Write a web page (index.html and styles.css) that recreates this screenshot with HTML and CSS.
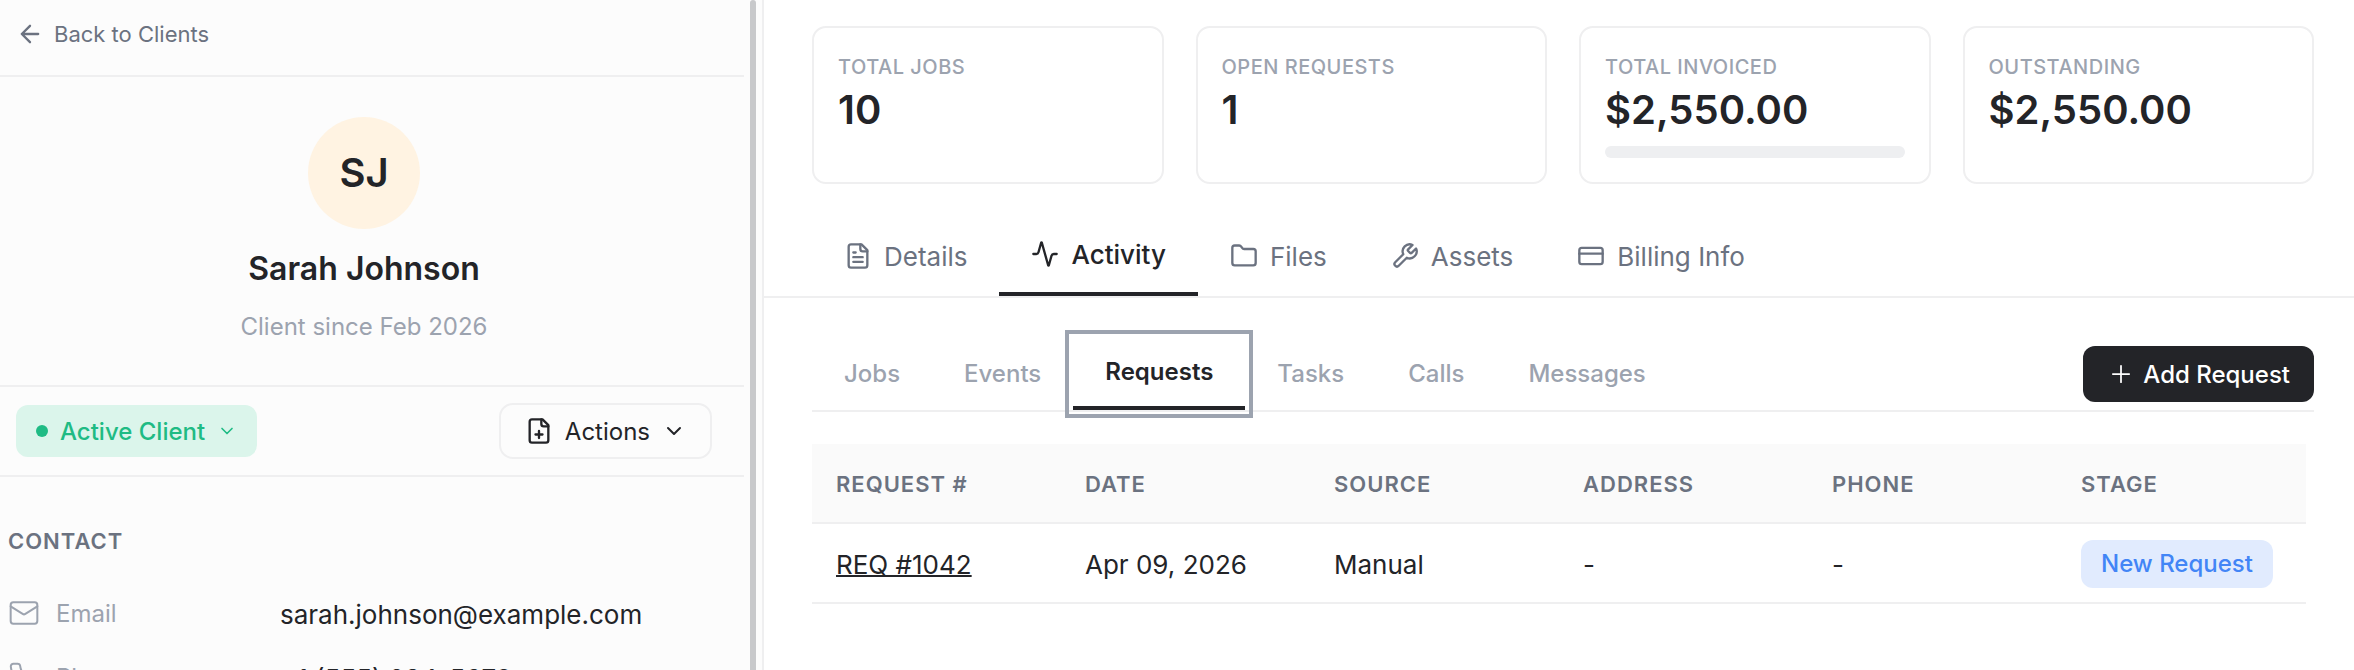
FILE: index.html
```html
<!DOCTYPE html>
<html lang="en">
<head>
<meta charset="utf-8">
<meta name="viewport" content="width=device-width, initial-scale=1">
<title>Sarah Johnson – Client</title>
<link rel="stylesheet" href="styles.css">
</head>
<body>
<div class="app">
  <aside class="sidebar">
    <div class="sidebar-body">
      <nav class="back">
        <a class="back-link" href="#clients">
          <svg class="icon" viewBox="0 0 24 24" aria-hidden="true"><path d="m12 19-7-7 7-7M19 12H5"/></svg>
          Back to Clients
        </a>
      </nav>
      <section class="profile">
        <div class="avatar">SJ</div>
        <h1 class="name">Sarah Johnson</h1>
        <p class="since">Client since Feb 2026</p>
      </section>
      <div class="status-row">
        <button class="status" type="button">
          <span class="dot"></span>
          Active Client
          <svg class="icon icon-xs" viewBox="0 0 24 24" aria-hidden="true"><path d="m6 9 6 6 6-6"/></svg>
        </button>
        <button class="actions" type="button">
          <svg class="icon" viewBox="0 0 24 24" aria-hidden="true"><path d="M15 2H6a2 2 0 0 0-2 2v16a2 2 0 0 0 2 2h12a2 2 0 0 0 2-2V7Z"/><path d="M14 2v4a2 2 0 0 0 2 2h4M9 15h6M12 12v6"/></svg>
          Actions
          <svg class="icon icon-sm" viewBox="0 0 24 24" aria-hidden="true"><path d="m6 9 6 6 6-6"/></svg>
        </button>
      </div>
      <section class="contact">
        <h2 class="contact-title">Contact</h2>
        <dl class="fields">
          <div class="field">
            <dt class="field-label">
              <svg class="icon icon-lg" viewBox="0 0 24 24" aria-hidden="true"><rect x="2" y="4" width="20" height="16" rx="2"/><path d="m22 7-8.97 5.7a1.94 1.94 0 0 1-2.06 0L2 7"/></svg>
              Email
            </dt>
            <dd class="field-value">sarah.johnson@example.com</dd>
          </div>
          <div class="field">
            <dt class="field-label">
              <svg class="icon icon-lg" viewBox="0 0 24 24" aria-hidden="true"><path d="M22 16.92v3a2 2 0 0 1-2.18 2 19.79 19.79 0 0 1-8.63-3.07 19.5 19.5 0 0 1-6-6 19.79 19.79 0 0 1-3.07-8.67A2 2 0 0 1 4.11 2h3a2 2 0 0 1 2 1.72 12.84 12.84 0 0 0 .7 2.81 2 2 0 0 1-.45 2.11L8.09 9.91a16 16 0 0 0 6 6l1.27-1.27a2 2 0 0 1 2.11-.45 12.84 12.84 0 0 0 2.81.7A2 2 0 0 1 22 16.92z"/></svg>
              Phone
            </dt>
            <dd class="field-value">+1 (555) 234-5678</dd>
          </div>
        </dl>
      </section>
    </div>
    <div class="scrollbar"></div>
  </aside>

  <main class="main">
    <section class="stats">
      <article class="card">
        <h2 class="card-label">Total Jobs</h2>
        <p class="card-value">10</p>
      </article>
      <article class="card">
        <h2 class="card-label">Open Requests</h2>
        <p class="card-value">1</p>
      </article>
      <article class="card">
        <h2 class="card-label">Total Invoiced</h2>
        <p class="card-value">$2,550.00</p>
        <div class="meter"></div>
      </article>
      <article class="card">
        <h2 class="card-label">Outstanding</h2>
        <p class="card-value">$2,550.00</p>
      </article>
    </section>

    <div class="tabs" role="tablist">
      <button class="tab" type="button" role="tab">
        <svg class="icon" viewBox="0 0 24 24" aria-hidden="true"><path d="M15 2H6a2 2 0 0 0-2 2v16a2 2 0 0 0 2 2h12a2 2 0 0 0 2-2V7Z"/><path d="M14 2v4a2 2 0 0 0 2 2h4M10 9H8M16 13H8M16 17H8"/></svg>
        Details
      </button>
      <button class="tab tab-active" type="button" role="tab" aria-selected="true">
        <svg class="icon" viewBox="0 0 24 24" aria-hidden="true"><path d="M22 12h-2.48a2 2 0 0 0-1.93 1.46l-2.35 8.36a.25.25 0 0 1-.48 0L9.24 2.18a.25.25 0 0 0-.48 0l-2.35 8.36A2 2 0 0 1 4.49 12H2"/></svg>
        Activity
      </button>
      <button class="tab" type="button" role="tab">
        <svg class="icon" viewBox="0 0 24 24" aria-hidden="true"><path d="M20 20a2 2 0 0 0 2-2V8a2 2 0 0 0-2-2h-7.900a2 2 0 0 1-1.690-.9L9.600 3.900A2 2 0 0 0 7.930 3H4a2 2 0 0 0-2 2v13a2 2 0 0 0 2 2Z"/></svg>
        Files
      </button>
      <button class="tab" type="button" role="tab">
        <svg class="icon" viewBox="0 0 24 24" aria-hidden="true"><path d="M14.700 6.300a1 1 0 0 0 0 1.400l1.600 1.600a1 1 0 0 0 1.400 0l3.770-3.770a6 6 0 0 1-7.940 7.940l-6.910 6.910a2.120 2.120 0 0 1-3-3l6.910-6.910a6 6 0 0 1 7.940-7.940l-3.760 3.760z"/></svg>
        Assets
      </button>
      <button class="tab" type="button" role="tab">
        <svg class="icon" viewBox="0 0 24 24" aria-hidden="true"><rect x="2" y="5" width="20" height="14" rx="2"/><path d="M2 10h20"/></svg>
        Billing Info
      </button>
    </div>

    <section class="activity">
      <div class="activity-bar">
        <div class="subtabs" role="tablist">
          <button class="subtab" type="button" role="tab">Jobs</button>
          <button class="subtab" type="button" role="tab">Events</button>
          <button class="subtab subtab-active" type="button" role="tab" aria-selected="true">Requests</button>
          <button class="subtab" type="button" role="tab">Tasks</button>
          <button class="subtab" type="button" role="tab">Calls</button>
          <button class="subtab" type="button" role="tab">Messages</button>
        </div>
        <button class="add" type="button">
          <svg class="icon icon-thin" viewBox="0 0 24 24" aria-hidden="true"><path d="M5 12h14M12 5v14"/></svg>
          Add Request
        </button>
      </div>
      <div class="table-wrap">
        <table class="requests">
          <thead>
            <tr><th>Request #</th><th>Date</th><th>Source</th><th>Address</th><th>Phone</th><th>Stage</th></tr>
          </thead>
          <tbody>
            <tr>
              <td><a class="req-link" href="#req-1042">REQ #1042</a></td>
              <td>Apr 09, 2026</td>
              <td>Manual</td>
              <td>-</td>
              <td>-</td>
              <td><span class="chip">New Request</span></td>
            </tr>
          </tbody>
        </table>
      </div>
    </section>
  </main>
</div>
</body>
</html>
```
FILE: styles.css
```css
:root {
  --ink: #232428;
  --slate: #6b7280;
  --muted: #9ca3af;
  --line: #efeff0;
  --panel: #fcfcfc;
}

* {
  box-sizing: border-box;
}

body {
  margin: 0;
  overflow: hidden;
  background: #fff;
  color: var(--ink);
  font-family: Inter, "Liberation Sans", sans-serif;
  font-size: 24px;
}

h1, h2, p, dl, dd {
  margin: 0;
}

button {
  margin: 0;
  padding: 0;
  border: 0;
  background: none;
  color: inherit;
  font: inherit;
  white-space: nowrap;
  cursor: pointer;
}

.icon {
  flex: none;
  width: 28px;
  height: 28px;
  fill: none;
  stroke: currentColor;
  stroke-width: 2;
  stroke-linecap: round;
  stroke-linejoin: round;
}

.icon-xs {
  width: 20px;
  height: 20px;
}

.icon-sm {
  width: 24px;
  height: 24px;
}

.icon-lg {
  width: 32px;
  height: 32px;
  stroke-width: 1.5;
}

.icon-thin {
  stroke-width: 1.5;
}

.app {
  display: flex;
  height: 100vh;
}

/* Sidebar */
.sidebar {
  display: flex;
  flex: none;
  gap: 6px;
  width: 764px;
  padding-right: 6px;
  border-right: 2px solid var(--line);
  background: var(--panel);
  overflow: hidden;
}

.sidebar-body {
  flex: 1;
}

.scrollbar {
  width: 6px;
  border-radius: 3px 3px 0 0;
  background: #c8c9cb;
}

.back {
  padding: 18px 16px 25px;
  border-bottom: 2px solid var(--line);
}

.back-link {
  display: flex;
  align-items: center;
  gap: 10px;
  color: var(--slate);
  font-size: 22px;
  line-height: 32px;
  text-decoration: none;
}

.profile {
  display: flex;
  flex-direction: column;
  align-items: center;
  gap: 21px;
  padding: 40px 16px 40px 0;
  border-bottom: 2px solid var(--line);
}

.avatar {
  width: 112px;
  height: 112px;
  border-radius: 50%;
  background: #fff3e2;
  font-size: 40px;
  font-weight: 600;
  line-height: 112px;
  text-align: center;
}

.name {
  font-size: 32px;
  font-weight: 600;
  line-height: 38px;
}

.since {
  color: var(--muted);
  line-height: 36px;
}

.status-row {
  display: flex;
  align-items: center;
  justify-content: space-between;
  padding: 16px 32px 16px 16px;
  border-bottom: 2px solid var(--line);
}

.status {
  display: flex;
  align-items: center;
  gap: 12px;
  height: 52px;
  padding: 0 20px;
  border-radius: 12px;
  background: #dbf5eb;
  color: #1fbb84;
  font-weight: 500;
}

.dot {
  width: 12px;
  height: 12px;
  border-radius: 50%;
  background: currentColor;
}

.actions {
  display: flex;
  align-items: center;
  gap: 12px;
  height: 56px;
  padding: 0 24px;
  border: 2px solid var(--line);
  border-radius: 14px;
}

.contact {
  padding: 48px 32px 0 8px;
}

.contact-title {
  margin-bottom: 24px;
  color: var(--slate);
  font-size: 22px;
  font-weight: 600;
  letter-spacing: 1px;
  line-height: 32px;
  text-transform: uppercase;
}

.field {
  display: grid;
  grid-template-columns: 272px 1fr;
  height: 64px;
}

.field-label {
  display: flex;
  align-items: center;
  gap: 16px;
  color: var(--muted);
}

.field-value {
  padding-top: 4px;
  font-size: 26px;
  line-height: 60px;
}

/* Main column */
.main {
  flex: 1;
  min-width: 0;
  padding-top: 26px;
}

.stats {
  display: grid;
  grid-template-columns: repeat(4, 1fr);
  gap: 32px;
  padding: 0 40px 0 48px;
}

.card {
  min-height: 158px;
  padding: 24px;
  border: 2px solid var(--line);
  border-radius: 14px;
}

.card-label {
  color: var(--muted);
  font-size: 20px;
  font-weight: 500;
  letter-spacing: 0.025em;
  line-height: 30px;
  text-transform: uppercase;
}

.card-value {
  font-size: 40px;
  font-weight: 600;
  line-height: 56px;
}

.meter {
  height: 12px;
  margin-top: 8px;
  border-radius: 6px;
  background: #eeeff1;
}

.tabs {
  display: flex;
  margin-top: 32px;
  padding: 0 48px;
  border-bottom: 2px solid var(--line);
}

.tab {
  display: flex;
  align-items: center;
  gap: 12px;
  height: 80px;
  padding: 0 32px;
  color: var(--slate);
  font-size: 26px;
}

.tab-active {
  border-bottom: 4px solid var(--ink);
  color: var(--ink);
  font-weight: 500;
}

.activity {
  padding: 40px 40px 0 48px;
}

.activity-bar {
  display: flex;
  align-items: flex-end;
  justify-content: space-between;
  border-bottom: 2px solid var(--line);
}

.subtabs {
  display: flex;
}

.subtab {
  height: 72px;
  padding: 0 32px 2px;
  color: var(--muted);
  font-weight: 500;
}

.subtab-active {
  border-bottom: 4px solid var(--ink);
  outline: 4px solid var(--muted);
  outline-offset: 4px;
  color: var(--ink);
  font-weight: 600;
}

.add {
  display: flex;
  align-items: center;
  gap: 8px;
  height: 56px;
  margin-bottom: 8px;
  padding: 0 24px;
  border-radius: 12px;
  background: var(--ink);
  color: #fff;
  font-weight: 500;
}

.table-wrap {
  margin-top: 32px;
  padding-right: 8px;
}

.requests {
  width: 100%;
  border-spacing: 0;
  table-layout: fixed;
}

.requests th,
.requests td {
  height: 80px;
  padding: 2px 24px 0;
  border-bottom: 2px solid var(--line);
  text-align: left;
  white-space: nowrap;
}

.requests th {
  background: #fafafa;
  color: var(--slate);
  font-size: 22px;
  font-weight: 600;
  letter-spacing: 1px;
  text-transform: uppercase;
}

.requests td {
  font-size: 26px;
}

.req-link {
  color: inherit;
  text-decoration: underline;
  text-decoration-thickness: 2px;
  text-decoration-skip-ink: none;
}

.chip {
  display: inline-block;
  padding: 0 20px;
  border-radius: 12px;
  background: #e1ebfe;
  color: #4285f6;
  font-size: 24px;
  font-weight: 500;
  line-height: 48px;
  vertical-align: middle;
}
```
